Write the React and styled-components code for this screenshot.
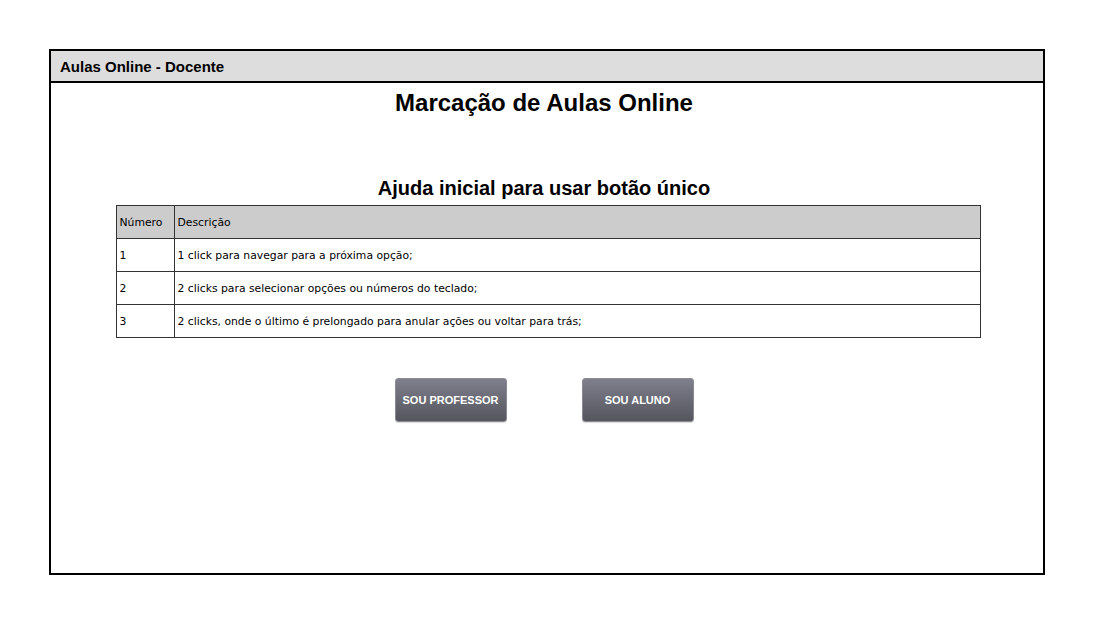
import React from 'react';
import styled, { createGlobalStyle } from 'styled-components';

const GlobalStyle = createGlobalStyle`
    html, body {
        margin: 0;
        padding: 0;
        background: #fff;
        font-family: "Liberation Sans", Arial, sans-serif;
    }
`;

const Page = styled.div`
    padding: 49px 0 0 49px;
`;

const Frame = styled.div`
    width: 992px;
    height: 522px;
    border: 2px solid #000;
    display: flex;
    flex-direction: column;
`;

const TitleBar = styled.header`
    height: 30px;
    background: #dddddd;
    border-bottom: 2px solid #000;
    display: flex;
    align-items: center;
    padding-left: 9px;
    font-size: 15px;
    font-weight: bold;
    color: #000;
`;

const Body = styled.main`
    display: flex;
    flex-direction: column;
    align-items: center;
`;

const Title = styled.h1`
    margin: 6px 0 0 -6px;
    font-size: 24px;
    line-height: 28px;
    font-weight: bold;
`;

const Subtitle = styled.h2`
    margin: 59px 0 0 -6px;
    font-size: 20px;
    line-height: 24px;
    font-weight: bold;
`;

const Table = styled.table`
    margin: 5px 0 0 2px;
    width: 865px;
    border-collapse: collapse;
    font-family: "Comic Sans MS", "DejaVu Sans", sans-serif;
    font-size: 10.8px;
    color: #000;
`;

const Cell = styled.td`
    border: 1px solid #333;
    height: 32px;
    padding: 0 3px;
    text-align: left;
    vertical-align: middle;
    width: ${p => (p.$narrow ? '51px' : 'auto')};
    background: ${p => (p.$head ? '#cccccc' : '#fff')};
    white-space: nowrap;
`;

const Buttons = styled.div`
    margin: 40px 0 0 -6px;
    display: flex;
    gap: 75px;
`;

const Button = styled.button`
    width: 112px;
    height: 44px;
    border: 1px solid #8a8a92;
    border-radius: 3px;
    background: linear-gradient(#7f7f8d, #55555e);
    color: #fff;
    font-family: "Liberation Sans", Arial, sans-serif;
    font-weight: bold;
    font-size: 11px;
    padding: 0;
    box-shadow: 0 1px 1px rgba(0, 0, 0, 0.15);
`;

const rows = [
    ['1', '1 click para navegar para a próxima opção;'],
    ['2', '2 clicks para selecionar opções ou números do teclado;'],
    ['3', '2 clicks, onde o último é prelongado para anular ações ou voltar para trás;'],
];

function App() {
    return (
        <Page>
            <GlobalStyle />
            <Frame>
                <TitleBar>Aulas Online - Docente</TitleBar>
                <Body>
                    <Title>Marcação de Aulas Online</Title>
                    <Subtitle>Ajuda inicial para usar botão único</Subtitle>
                    <Table>
                        <tbody>
                            <tr>
                                <Cell $head $narrow>Número</Cell>
                                <Cell $head>Descrição</Cell>
                            </tr>
                            {rows.map(([n, d]) => (
                                <tr key={n}>
                                    <Cell $narrow>{n}</Cell>
                                    <Cell>{d}</Cell>
                                </tr>
                            ))}
                        </tbody>
                    </Table>
                    <Buttons>
                        <Button>SOU PROFESSOR</Button>
                        <Button>SOU ALUNO</Button>
                    </Buttons>
                </Body>
            </Frame>
        </Page>
    );
}

export default App;
